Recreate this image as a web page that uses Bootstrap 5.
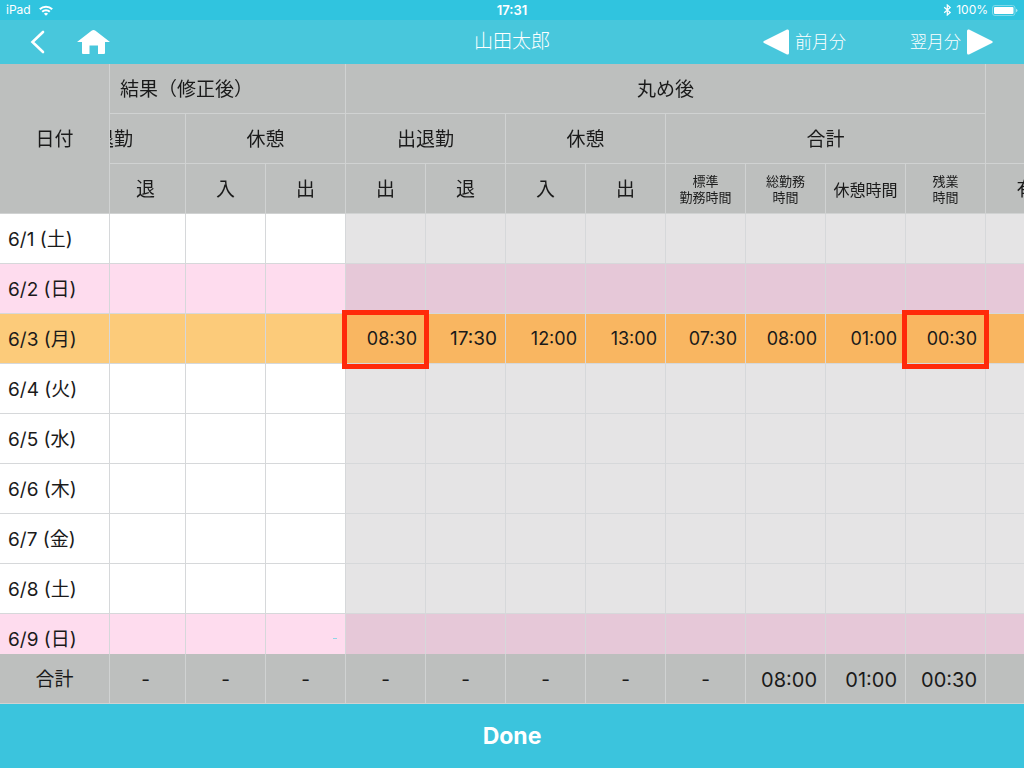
<!DOCTYPE html>
<html lang="ja">
<head>
<meta charset="utf-8">
<meta name="viewport" content="width=device-width, initial-scale=1">
<title>山田太郎</title>
<link href="https://cdn.jsdelivr.net/npm/bootstrap@5.3.0/dist/css/bootstrap.min.css" rel="stylesheet">
<style>
body{font-family:Inter,"Noto Sans CJK JP",sans-serif;font-size:19px;line-height:24px;color:#1a1a1a;background:#3bc4dd}
.status-bar{height:20px;padding:0 6px;background:#30c4df;font-size:12px;line-height:20px}
.clock{font-size:13px;font-weight:600}
.split{display:grid;grid-template-columns:1fr auto 1fr}
.title-bar{height:44px;background:#48c7dc;font-weight:300}
.title-bar h1{font-size:19px;font-weight:300}
.title-bar a{font-size:17px;gap:6px}
.month-links{gap:64px;padding-right:31px}
.sheet{overflow:auto;scrollbar-width:none}
.sheet::-webkit-scrollbar{display:none}
.timesheet{table-layout:fixed;width:100%;min-width:1086px;border-collapse:separate;border-spacing:0}
.timesheet th,.timesheet td{height:50px;padding:0 8px;vertical-align:middle;font-weight:400;white-space:nowrap;
  border-right:1px solid #d6d8da;border-bottom:1px solid #d6d8da}
.timesheet thead,.timesheet tfoot{position:sticky;z-index:3;text-align:center}
.timesheet thead{top:0}
.timesheet tfoot{bottom:0}
.timesheet thead th,.timesheet tfoot th,.timesheet tfoot td{background:#bdbfbe;border-color:#d0d2d2;padding:2px 0 0}
.timesheet tfoot td.total{font-size:20px;text-align:right;padding-right:8px}
.timesheet thead th.two-line{font-size:13px;line-height:16px;padding-top:0}
.timesheet thead th.compact{font-size:16px}
.timesheet thead th.group-label{text-align:left;padding-left:10px}
.timesheet thead th.narrow,.timesheet tfoot td.narrow{padding-right:4px}
.timesheet tbody td{text-align:right;background:#fff;font-size:18px}
.timesheet tbody th{background:#fff;padding-top:2px}
.timesheet tbody td.r{background:#e5e4e5}
.timesheet .holiday>*{background:#fedcee}
.timesheet tbody .holiday td.r{background:#e6c8d8}
.timesheet .today>*{background:#fccb7a}
.timesheet tbody .today td.r{background:#f9b661;position:relative}
.timesheet tbody td.wide{font-size:19px}
.clip{overflow:hidden;padding-right:52px}
.marker::after{content:"";position:absolute;inset:-4px -4px -6px;border:5px solid #ff2a0a;z-index:2}
.tick{width:4px;height:1px;background:#8fd6e6}
.done{height:64px;background:#3bc4dd;font-size:23px;font-weight:700}
</style>
</head>
<body>
<div class="d-flex flex-column vh-100">
  <header class="text-white">
    <div class="status-bar split">
      <div class="d-flex align-items-center gap-2"><span>iPad</span>
        <svg width="14" height="11" viewBox="0 0 14 11" fill="none" stroke="#fff" stroke-width="2"><path d="M.8 4.3a8.8 8.8 0 0 1 12.4 0M3.2 6.7a5.4 5.4 0 0 1 7.6 0"/><path d="M7 10.8 4.9 8.700a3 3 0 0 1 4.2 0z" fill="#fff" stroke="none"/></svg>
      </div>
      <div class="clock">17:31</div>
      <div class="d-flex align-items-center justify-content-end gap-1">
        <svg width="9" height="12" viewBox="0 0 9 12" fill="none" stroke="#fff" stroke-width="1.2"><path d="m1.200 3.300 6 5.200L4.300 11V1l2.900 2.500-6 5.200"/></svg>
        <span>100%</span>
        <svg width="26" height="11" viewBox="0 0 26 11"><rect x=".5" y=".5" width="22.5" height="10" rx="2.5" fill="none" stroke="#7fd9ea"/><rect x="2" y="2" width="19.5" height="7" rx="1" fill="#fff"/><path d="M24 3.700q1.500.5 1.500 1.800T24 7.300z" fill="#a5e4f0"/></svg>
      </div>
    </div>
    <nav class="title-bar split align-items-center">
      <div class="d-flex align-items-center gap-4 ps-4">
        <button type="button" class="btn p-0 border-0 d-flex ps-1" aria-label="戻る"><svg width="20" height="24" viewBox="0 0 20 24" fill="none" stroke="#fff" stroke-width="2.6" stroke-linecap="round"><path d="M15 2 4.500 12 15 22"/></svg></button>
        <button type="button" class="btn p-0 border-0 d-flex ps-1" aria-label="ホーム"><svg width="34" height="25" viewBox="0 0 34 25" fill="#fff"><path d="M17.500 0q1 0 2 .8L34 12H29v11q0 1-1 1h-6v-8.500h-8.500V24h-6.500q-1 0-1-1V12H1L15.500 .8Q16.500 0 17.500 0z"/></svg></button>
      </div>
      <h1 class="m-0">山田太郎</h1>
      <div class="d-flex justify-content-end month-links">
        <a href="#" class="d-flex align-items-center text-white text-decoration-none"><svg width="26" height="26" viewBox="0 0 26 26" fill="#fff"><path d="M24 .6Q26 0 26 2v22q0 2-2 1.400L1 14Q-.5 13 1 12z"/></svg><span>前月分</span></a>
        <a href="#" class="d-flex align-items-center text-white text-decoration-none"><span>翌月分</span><svg width="26" height="26" viewBox="0 0 26 26" fill="#fff"><path d="M2 .6Q0 0 0 2v22q0 2 2 1.400L25 14q1.500-1 0-2z"/></svg></a>
      </div>
    </nav>
  </header>

  <main class="sheet flex-fill">
    <table class="timesheet">
      <colgroup><col style="width:110px"><col style="width:76px"><col span="10" style="width:80px"><col style="width:100px"></colgroup>
      <thead>
        <tr><th rowspan="3">日付</th><th colspan="3" class="group-label">結果（修正後）</th><th colspan="8">丸め後</th><th rowspan="2"></th></tr>
        <tr><th><div class="clip d-flex justify-content-end">出退勤</div></th><th colspan="2">休憩</th><th colspan="2">出退勤</th><th colspan="2">休憩</th><th colspan="4">合計</th></tr>
        <tr><th class="narrow">退</th><th>入</th><th>出</th><th>出</th><th>退</th><th>入</th><th>出</th><th class="two-line">標準<br>勤務時間</th><th class="two-line">総勤務<br>時間</th><th class="compact">休憩時間</th><th class="two-line">残業<br>時間</th><th>有休</th></tr>
      </thead>
      <tbody>
        <tr><th scope="row">6/1 (土)</th><td></td><td></td><td></td><td class="r"></td><td class="r"></td><td class="r"></td><td class="r"></td><td class="r"></td><td class="r"></td><td class="r"></td><td class="r"></td><td class="r"></td></tr>
        <tr class="holiday"><th scope="row">6/2 (日)</th><td></td><td></td><td></td><td class="r"></td><td class="r"></td><td class="r"></td><td class="r"></td><td class="r"></td><td class="r"></td><td class="r"></td><td class="r"></td><td class="r"></td></tr>
        <tr class="today"><th scope="row">6/3 (月)</th><td></td><td></td><td></td><td class="r marker">08:30</td><td class="r wide">17:30</td><td class="r">12:00</td><td class="r">13:00</td><td class="r">07:30</td><td class="r">08:00</td><td class="r">01:00</td><td class="r marker">00:30</td><td class="r"></td></tr>
        <tr><th scope="row">6/4 (火)</th><td></td><td></td><td></td><td class="r"></td><td class="r"></td><td class="r"></td><td class="r"></td><td class="r"></td><td class="r"></td><td class="r"></td><td class="r"></td><td class="r"></td></tr>
        <tr><th scope="row">6/5 (水)</th><td></td><td></td><td></td><td class="r"></td><td class="r"></td><td class="r"></td><td class="r"></td><td class="r"></td><td class="r"></td><td class="r"></td><td class="r"></td><td class="r"></td></tr>
        <tr><th scope="row">6/6 (木)</th><td></td><td></td><td></td><td class="r"></td><td class="r"></td><td class="r"></td><td class="r"></td><td class="r"></td><td class="r"></td><td class="r"></td><td class="r"></td><td class="r"></td></tr>
        <tr><th scope="row">6/7 (金)</th><td></td><td></td><td></td><td class="r"></td><td class="r"></td><td class="r"></td><td class="r"></td><td class="r"></td><td class="r"></td><td class="r"></td><td class="r"></td><td class="r"></td></tr>
        <tr><th scope="row">6/8 (土)</th><td></td><td></td><td></td><td class="r"></td><td class="r"></td><td class="r"></td><td class="r"></td><td class="r"></td><td class="r"></td><td class="r"></td><td class="r"></td><td class="r"></td></tr>
        <tr class="holiday"><th scope="row">6/9 (日)</th><td></td><td></td><td><div class="tick ms-auto"></div></td><td class="r"></td><td class="r"></td><td class="r"></td><td class="r"></td><td class="r"></td><td class="r"></td><td class="r"></td><td class="r"></td><td class="r"></td></tr>
      </tbody>
      <tfoot>
        <tr><th scope="row">合計</th><td class="narrow">-</td><td>-</td><td>-</td><td>-</td><td>-</td><td>-</td><td>-</td><td>-</td><td class="total">08:00</td><td class="total">01:00</td><td class="total">00:30</td><td></td></tr>
      </tfoot>
    </table>
  </main>

  <button type="button" class="btn done w-100 rounded-0 border-0 p-0 text-white flex-shrink-0">Done</button>
</div>
<script src="https://cdn.jsdelivr.net/npm/bootstrap@5.3.0/dist/js/bootstrap.bundle.min.js"></script>
</body>
</html>
